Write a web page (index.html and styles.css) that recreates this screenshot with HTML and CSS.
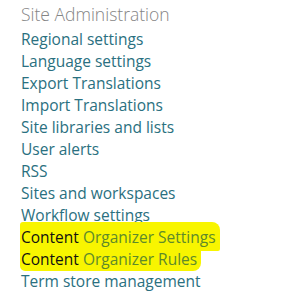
FILE: index.html
```html
<!DOCTYPE html>
<html>
<head>
<meta charset="utf-8">
<title>Site Settings</title>
<link rel="stylesheet" href="styles.css">
</head>
<body>
<div class="AdminBlock">
    <h3 class="AdminTitle">Site Administration</h3>
    <ul class="AdminLinks">
        <li><a href="#">Regional settings</a></li>
        <li><a href="#">Language settings</a></li>
        <li><a href="#">Export Translations</a></li>
        <li><a href="#">Import Translations</a></li>
        <li><a href="#">Site libraries and lists</a></li>
        <li><a href="#">User alerts</a></li>
        <li><a href="#">RSS</a></li>
        <li><a href="#">Sites and workspaces</a></li>
        <li><a href="#">Workflow settings</a></li>
        <li class="Marked MarkedFirst"><span class="Ink"><b>Content</b> <a href="#">Organizer Settings</a></span></li>
        <li class="Marked MarkedSecond"><span class="Ink"><b>Content</b> <a href="#">Organizer Rules</a></span></li>
        <li><a href="#">Term store management</a></li>
    </ul>
</div>
</body>
</html>
```
FILE: styles.css
```css
html, body {
    margin: 0;
    background: #fff;
    font-family: "Open Sans", "Noto Sans", Arial, sans-serif;
}
.AdminBlock {
    padding: 0 0 0 21px;
}
.AdminTitle {
    margin: 0;
    font-weight: 300;
    font-size: 17.5px;
    line-height: 28px;
    color: #858585;
}
.AdminLinks {
    list-style: none;
    margin: 0;
    padding: 0;
}
.AdminLinks li {
    font-size: 15.5px;
    line-height: 22px;
    height: 22px;
}
.AdminLinks a {
    color: #2a7080;
    text-decoration: none;
}
.Ink {
    display: inline-block;
    background: #f8f500;
    margin-left: -1px;
    padding: 0 4px 0 1px;
}
.Ink b {
    font-weight: normal;
    color: #111;
}
.Marked a {
    color: #5e8a2a;
}
.MarkedFirst .Ink {
    border-radius: 3px 8px 2px 3px;
    padding-top: 4px;
    padding-bottom: 3px;
    margin-top: -4px;
}
.MarkedSecond .Ink {
    border-radius: 0 2px 8px 5px;
    padding-bottom: 1px;
}
```
